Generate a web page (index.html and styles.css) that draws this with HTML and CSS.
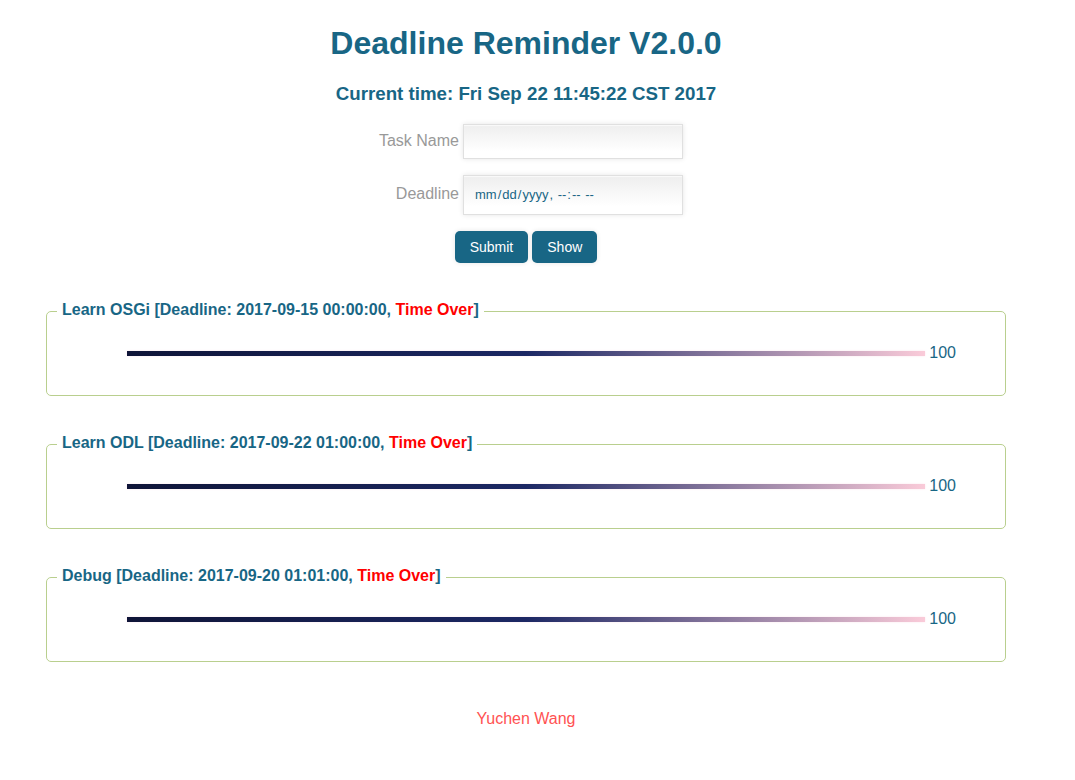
FILE: index.html
```html
<!DOCTYPE html>
<html lang="en">
<head>
<meta charset="utf-8">
<title>Deadline Reminder</title>
<link rel="stylesheet" href="styles.css">
</head>
<body>
<main class="page">
  <h1 class="title">Deadline Reminder V2.0.0</h1>
  <h3 class="clock">Current time: Fri Sep 22 11:45:22 CST 2017</h3>
  <form class="form">
    <div class="row"><label for="task">Task Name</label> <input class="field" id="task" type="text"></div>
    <div class="row"><label for="deadline">Deadline</label> <input class="field field-date" id="deadline" type="datetime-local"></div>
    <div class="actions"><button class="btn" type="submit">Submit</button> <button class="btn" type="button">Show</button></div>
  </form>
  <section class="tasks">
    <fieldset class="task">
      <legend>Learn OSGi [Deadline: 2017-09-15 00:00:00, <span class="over">Time Over</span>]</legend>
      <div class="progress"><div class="bar"></div><span>100</span></div>
    </fieldset>
    <fieldset class="task">
      <legend>Learn ODL [Deadline: 2017-09-22 01:00:00, <span class="over">Time Over</span>]</legend>
      <div class="progress"><div class="bar"></div><span>100</span></div>
    </fieldset>
    <fieldset class="task">
      <legend>Debug [Deadline: 2017-09-20 01:01:00, <span class="over">Time Over</span>]</legend>
      <div class="progress"><div class="bar"></div><span>100</span></div>
    </fieldset>
  </section>
  <footer class="footer"><a href="#">Yuchen Wang</a></footer>
</main>
</body>
</html>
```
FILE: styles.css
```css
* { box-sizing: border-box; }
body {
  margin: 0;
  background: #fff;
  color: #186685;
  font: 16px/18px "Liberation Sans", Arial, sans-serif;
}
.page { padding: 24px 69px 40px 46px; }
.title {
  margin: 0;
  font-size: 32px;
  line-height: 38px;
  text-align: center;
}
.clock {
  margin: 20px 0 18px;
  line-height: 24px;
  text-align: center;
}
.form {
  display: flex;
  flex-direction: column;
  align-items: center;
  gap: 16px;
}
.row {
  display: flex;
  align-items: center;
  justify-content: flex-end;
  gap: 4px;
  width: 314px;
  color: #999;
}
.row label { padding-bottom: 2px; }
.field {
  width: 220px;
  height: 35px;
  padding: 9px 10px 11px;
  border: 1px solid #e0e0e0;
  background: linear-gradient(#eee, #fff 80%);
  box-shadow: 0 0 5px rgba(0, 0, 0, 0.1), inset 0 1px 1px rgba(255, 255, 255, 0.7);
  color: #186685;
  font: 13px "Liberation Sans", Arial, sans-serif;
}
.field-date { height: 40px; }
.field-date::-webkit-calendar-picker-indicator { display: none; }
.actions { display: flex; gap: 4px; }
.btn {
  height: 32px;
  padding: 0 15px;
  border: 0;
  border-radius: 5px;
  background: #186685;
  box-shadow: 0 0 5px rgba(0, 0, 0, 0.1);
  color: #fff;
  font: 14px "Liberation Sans", Arial, sans-serif;
}
.tasks {
  display: flex;
  flex-direction: column;
  gap: 38px;
  margin-top: 38px;
}
.task {
  min-width: 0;
  margin: 0;
  padding: 22px 49px 32px 80px;
  border: 1px solid #b9cf8e;
  border-radius: 5px;
}
.task legend {
  margin-left: -70px;
  padding: 0 5px 2px;
  font-weight: bold;
}
.over { color: #f00; }
.progress {
  display: flex;
  align-items: center;
  gap: 4px;
  line-height: 20px;
}
.bar {
  flex: 1;
  height: 5px;
  background: linear-gradient(to right, #0f1538, #1c2864 50%, #facbd9);
  box-shadow: 0 0 2px rgba(250, 203, 217, 0.6);
}
.footer { margin-top: 48px; text-align: center; }
.footer a { color: #ff5252; text-decoration: none; }
```
